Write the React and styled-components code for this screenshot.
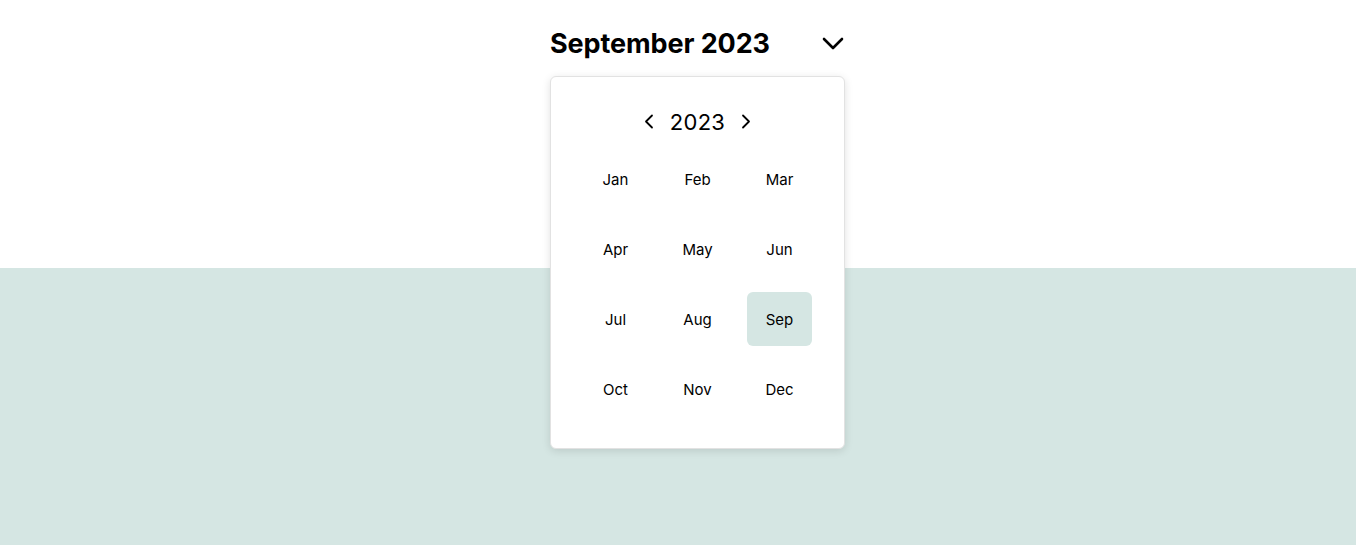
import React, { useState } from 'react';
import styled, { createGlobalStyle } from 'styled-components';

const months = ['Jan', 'Feb', 'Mar', 'Apr', 'May', 'Jun', 'Jul', 'Aug', 'Sep', 'Oct', 'Nov', 'Dec'];

const App = () => {
  const [year, setYear] = useState(2023);
  const [selected, setSelected] = useState(8);

  return (
    <>
      <GlobalStyle />
      <Page>
        <Top>
          <Picker>
            <Header>
              <Title>{months[selected] === 'Sep' ? 'September' : months[selected]} {year}</Title>
              <IconButton aria-label="toggle">
                <svg width="22" height="13" viewBox="0 0 22 13" fill="none">
                  <polyline points="2,2 11,11 20,2" stroke="#000" strokeWidth="2.6" strokeLinecap="round" strokeLinejoin="round" />
                </svg>
              </IconButton>
            </Header>
            <Popover>
              <YearRow>
                <ArrowButton onClick={() => setYear(year - 1)} aria-label="previous year">
                  <svg width="10" height="15" viewBox="0 0 10 15" fill="none">
                    <polyline points="8,1.5 2,7.5 8,13.5" stroke="#000" strokeWidth="1.8" strokeLinecap="round" strokeLinejoin="round" />
                  </svg>
                </ArrowButton>
                <Year>{year}</Year>
                <ArrowButton onClick={() => setYear(year + 1)} aria-label="next year">
                  <svg width="10" height="15" viewBox="0 0 10 15" fill="none">
                    <polyline points="2,1.5 8,7.5 2,13.5" stroke="#000" strokeWidth="1.8" strokeLinecap="round" strokeLinejoin="round" />
                  </svg>
                </ArrowButton>
              </YearRow>
              <MonthGrid>
                {months.map((m, i) => (
                  <MonthCell key={m} $active={i === selected} onClick={() => setSelected(i)}>
                    {m}
                  </MonthCell>
                ))}
              </MonthGrid>
            </Popover>
          </Picker>
        </Top>
        <Band />
      </Page>
    </>
  );
};

const GlobalStyle = createGlobalStyle`
  html, body {
    margin: 0;
    padding: 0;
    background: #fff;
  }
  body {
    font-family: Inter, "Noto Sans", "Liberation Sans", sans-serif;
    color: #000;
  }
`;

const Page = styled.div`
  display: flex;
  flex-direction: column;
  min-height: 545px;
`;

const Top = styled.div`
  height: 268px;
  display: flex;
  justify-content: center;
  padding-top: 24px;
  padding-left: 39px;
  box-sizing: border-box;
  position: relative;
  z-index: 1;
`;

const Band = styled.div`
  flex: 1;
  background: #d5e6e3;
`;

const Picker = styled.div`
  position: relative;
  width: 295px;
  height: 38px;
`;

const Header = styled.div`
  display: flex;
  align-items: center;
  justify-content: space-between;
  height: 38px;
`;

const Title = styled.h1`
  margin: 2px 0 0 0;
  font-size: 27px;
  font-weight: 700;
  letter-spacing: -0.1px;
  line-height: 38px;
`;

const IconButton = styled.button`
  border: 0;
  background: none;
  padding: 0;
  display: flex;
  align-items: center;
  cursor: pointer;
  margin-right: 1px;
  margin-top: 1px;
`;

const Popover = styled.div`
  position: absolute;
  top: 52px;
  left: 0;
  width: 295px;
  box-sizing: border-box;
  background: #fff;
  border: 1px solid #e2e2e2;
  border-radius: 6px;
  box-shadow: 0 2px 8px rgba(0, 0, 0, 0.12);
  padding: 26px 32px 32px 32px;
`;

const YearRow = styled.div`
  display: flex;
  align-items: center;
  justify-content: center;
  gap: 16px;
  height: 38px;
`;

const Year = styled.span`
  font-size: 22px;
  font-weight: 400;
  letter-spacing: 0.3px;
`;

const ArrowButton = styled.button`
  border: 0;
  background: none;
  padding: 0;
  display: flex;
  align-items: center;
  cursor: pointer;
  margin-top: -2px;
`;

const MonthGrid = styled.div`
  display: grid;
  grid-template-columns: repeat(3, 65px);
  grid-auto-rows: 54px;
  column-gap: 17px;
  row-gap: 16px;
  justify-content: center;
  margin-top: 11px;
`;

const MonthCell = styled.button`
  border: 0;
  border-radius: 6px;
  background: ${(p) => (p.$active ? '#d5e6e3' : 'transparent')};
  font-family: inherit;
  font-size: 15px;
  color: #000;
  cursor: pointer;
  padding: 0;
`;

export default App;
